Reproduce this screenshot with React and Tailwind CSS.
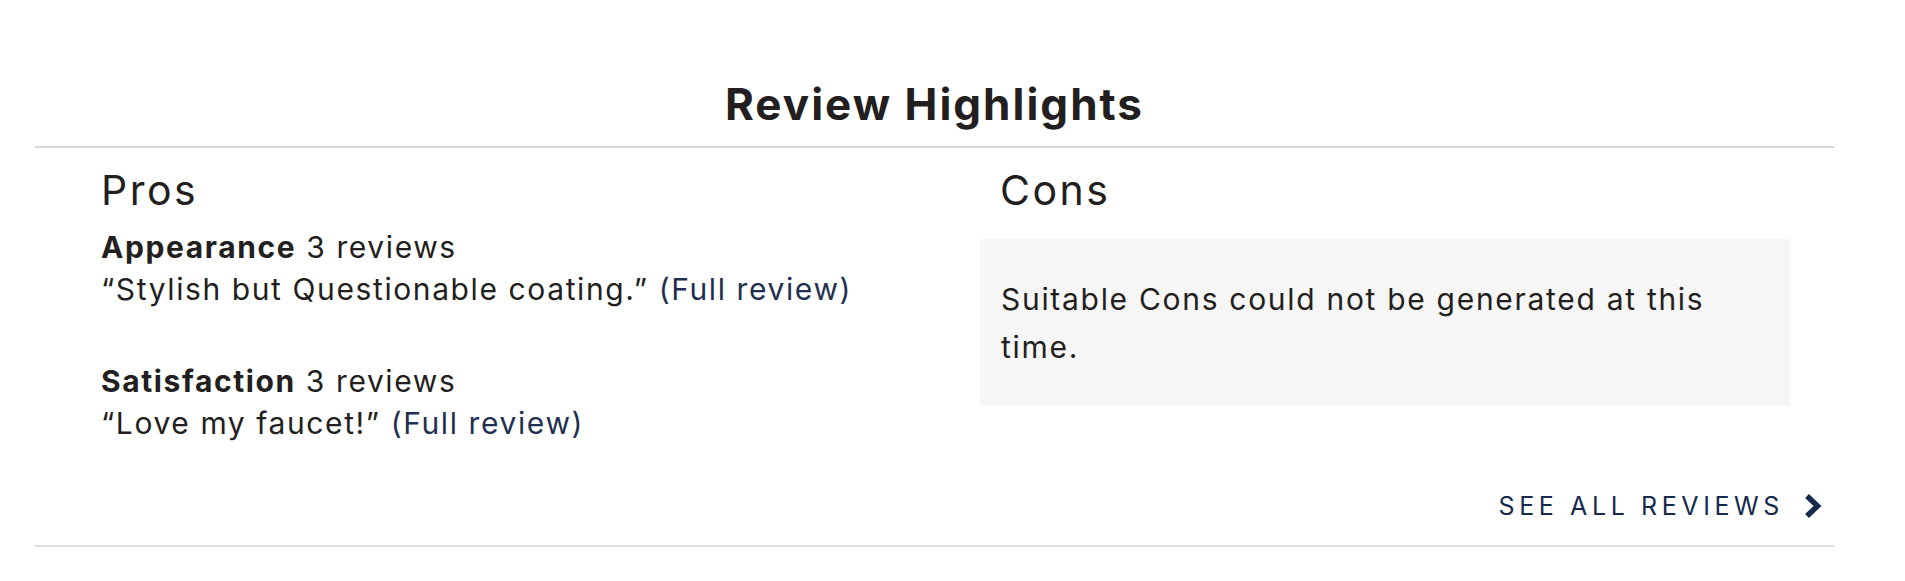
export default function App() {
    const pros = [
        { title: 'Appearance', count: '3 reviews', quote: '“Stylish but Questionable coating.”' },
        { title: 'Satisfaction', count: '3 reviews', quote: '“Love my faucet!”' },
    ];

    return (
        <div className="w-[1905px] h-[581px] bg-white text-[#231f20] font-['Inter',sans-serif]">
            <div className="ml-[35px] w-[1799px] pt-[82px]">
                <h2 className="text-center text-[44px] leading-none font-bold tracking-[2px]">Review Highlights</h2>
                <div className="mt-[20px] h-[2px] bg-[#d9d9d9]"></div>

                {/* Pros / Cons */}
                <div className="flex">
                    <div className="w-[945px] pl-[66px] pt-[22px]">
                        <h3 className="text-[41px] leading-none font-normal tracking-[2.5px]">Pros</h3>
                        <div className="mt-[15px] space-y-[50px]">
                            {pros.map((p) => (
                                <div key={p.title} className="text-[30px] leading-[42px] tracking-[1.6px]">
                                    <p>
                                        <span className="font-bold">{p.title}</span> {p.count}
                                    </p>
                                    <p>
                                        {p.quote} <a href="#" className="text-[#1f3050]">(Full review)</a>
                                    </p>
                                </div>
                            ))}
                        </div>
                    </div>

                    <div className="w-[810px] pt-[22px]">
                        <h3 className="pl-[20px] text-[41px] leading-none font-normal tracking-[2.5px]">Cons</h3>
                        <div className="mt-[28px] h-[167px] bg-[#f6f6f6] pl-[21px] pt-[36px]">
                            <p className="max-w-[740px] text-[30px] leading-[48px] tracking-[1.7px]">
                                Suitable Cons could not be generated at this time.
                            </p>
                        </div>
                    </div>
                </div>

                <div className="mt-[49px] flex justify-end pr-[12px]">
                    <a href="#" className="flex items-center gap-[20px] text-[#152a4d]">
                        <span className="text-[25px] leading-none tracking-[4.6px] uppercase">See all reviews</span>
                        <svg className="w-[18px] h-[26px]" viewBox="0 0 18 26" fill="none">
                            <polyline points="3,3 13.5,13 3,23" stroke="currentColor" strokeWidth="5.5" strokeLinejoin="miter" />
                        </svg>
                    </a>
                </div>
                <div className="mt-[26px] h-[2px] bg-[#dedede]"></div>
            </div>
        </div>
    );
}
